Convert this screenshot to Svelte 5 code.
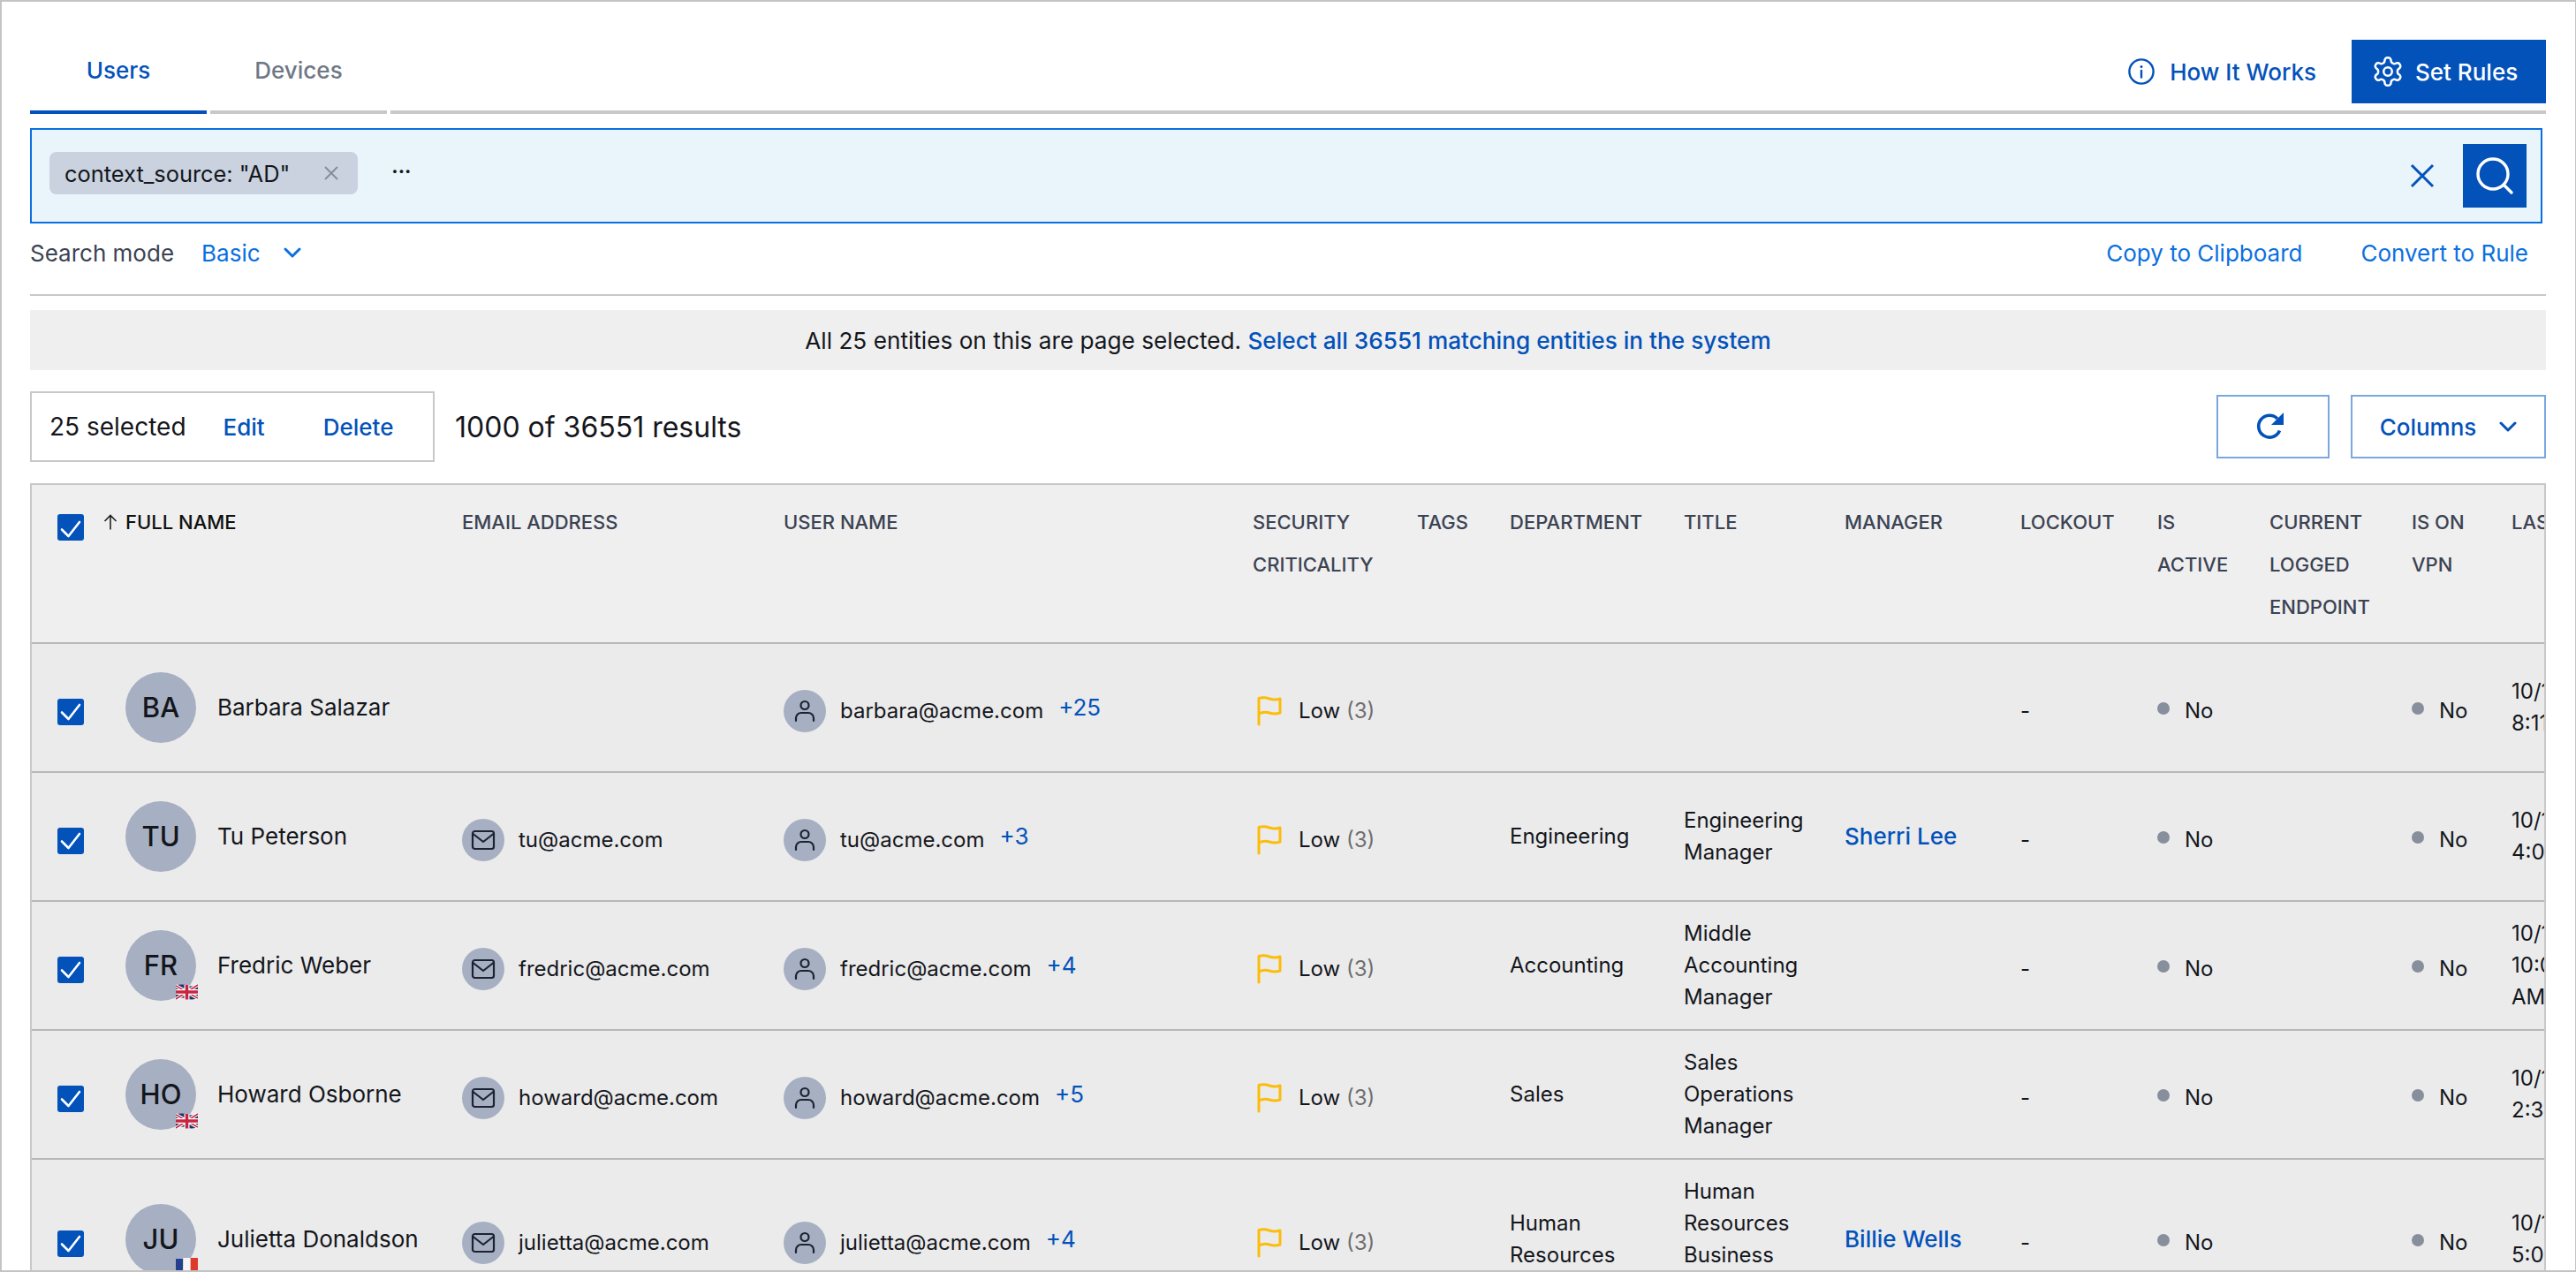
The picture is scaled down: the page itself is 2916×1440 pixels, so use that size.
<script>
  const rows = [
    { ini: 'BA', name: 'Barbara Salazar', email: '', user: 'barbara@acme.com', more: '+25', dept: '', title: '', mgr: '', last: ['10/12/2023', '8:11:20 AM'] },
    { ini: 'TU', name: 'Tu Peterson', email: 'tu@acme.com', user: 'tu@acme.com', more: '+3', dept: 'Engineering', title: 'Engineering Manager', mgr: 'Sherri Lee', last: ['10/12/2023', '4:02:11 PM'] },
    { ini: 'FR', name: 'Fredric Weber', flag: 'uk', email: 'fredric@acme.com', user: 'fredric@acme.com', more: '+4', dept: 'Accounting', title: 'Middle Accounting Manager', mgr: '', last: ['10/12/2023', '10:05:41', 'AM'] },
    { ini: 'HO', name: 'Howard Osborne', flag: 'uk', email: 'howard@acme.com', user: 'howard@acme.com', more: '+5', dept: 'Sales', title: 'Sales Operations Manager', mgr: '', last: ['10/12/2023', '2:31:09 PM'] },
    { ini: 'JU', name: 'Julietta Donaldson', flag: 'fr', email: 'julietta@acme.com', user: 'julietta@acme.com', more: '+4', dept: 'Human Resources', title: 'Human Resources Business Partner', mgr: 'Billie Wells', last: ['10/12/2023', '5:07:33 PM'] }
  ];
  const widths = [106, 381, 364, 531, 186, 105, 197, 182, 199, 155, 127, 161, 113, 37];
  const heads = ['EMAIL ADDRESS', 'USER NAME', 'SECURITY CRITICALITY', 'TAGS', 'DEPARTMENT', 'TITLE', 'MANAGER', 'LOCKOUT', 'IS ACTIVE', 'CURRENT LOGGED ENDPOINT', 'IS ON VPN'];
</script>

{#snippet check()}
  <span class="check">
    <svg viewBox="0 0 30 30" width="30" height="30"><path d="M5 15.500l7.500 7.500L25 7" fill="none" stroke="#fff" stroke-width="2.600" stroke-linecap="round" stroke-linejoin="round" /></svg>
  </span>
{/snippet}

{#snippet chevron(w, sw)}
  <svg viewBox="0 0 20 12" width={w} height={w * 0.6}><path d="M2 2l8 8 8-8" fill="none" stroke="currentColor" stroke-width={sw} stroke-linecap="round" stroke-linejoin="round" /></svg>
{/snippet}

<div class="frame">
  <header class="top">
    <div class="tab active">Users</div>
    <div class="tab">Devices</div>
    <div class="fill">
      <button class="how">
        <svg viewBox="0 0 30 30" width="30" height="30" fill="none" stroke="currentColor" stroke-width="2.400"><circle cx="15" cy="15" r="13.600" /><path d="M15 14v7.500" stroke-linecap="round" /><circle cx="15" cy="9.400" r="1.500" fill="currentColor" stroke="none" /></svg>
        How It Works
      </button>
      <button class="rules">
        <svg viewBox="0 0 24 24" width="38" height="38" fill="none" stroke="currentColor" stroke-width="1.600" stroke-linecap="round" stroke-linejoin="round"><path d="M12.220 2h-.44a2 2 0 0 0-2 2v.18a2 2 0 0 1-1 1.730l-.43.25a2 2 0 0 1-2 0l-.15-.08a2 2 0 0 0-2.730.73l-.22.38a2 2 0 0 0 .73 2.730l.15.1a2 2 0 0 1 1 1.720v.51a2 2 0 0 1-1 1.740l-.15.09a2 2 0 0 0-.73 2.730l.22.38a2 2 0 0 0 2.730.73l.15-.08a2 2 0 0 1 2 0l.43.25a2 2 0 0 1 1 1.730V20a2 2 0 0 0 2 2h.44a2 2 0 0 0 2-2v-.18a2 2 0 0 1 1-1.730l.43-.25a2 2 0 0 1 2 0l.15.08a2 2 0 0 0 2.730-.73l.22-.39a2 2 0 0 0-.73-2.730l-.15-.08a2 2 0 0 1-1-1.740v-.5a2 2 0 0 1 1-1.740l.15-.09a2 2 0 0 0 .73-2.730l-.22-.38a2 2 0 0 0-2.730-.73l-.15.08a2 2 0 0 1-2 0l-.43-.25a2 2 0 0 1-1-1.730V4a2 2 0 0 0-2-2z" /><circle cx="12" cy="12" r="3" /></svg>
        Set Rules
      </button>
    </div>
  </header>

  <div class="search">
    <span class="chip"><span class="chiptext">context_source: "AD"</span>
      <svg viewBox="0 0 18 18" width="18" height="18"><path d="M2 2l14 14M16 2L2 16" stroke="#858c99" stroke-width="1.800" fill="none" /></svg>
    </span>
    <span class="dots">···</span>
    <svg class="clear" viewBox="0 0 28 28" width="28" height="28"><path d="M2 2l24 24M26 2L2 26" stroke="#0352ba" stroke-width="3" fill="none" /></svg>
    <button class="go" aria-label="Search">
      <svg viewBox="0 0 44 44" width="44" height="44" fill="none" stroke="#fff" stroke-width="3.400" stroke-linecap="round"><circle cx="20" cy="20" r="17" /><path d="M33 33l8 8" /></svg>
    </button>
  </div>

  <div class="mode">
    <span class="ml">Search mode</span>
    <span class="basic">Basic {@render chevron(20, 3)}</span>
    <span class="spacer"></span>
    <span class="lnk">Copy to Clipboard</span>
    <span class="lnk conv">Convert to Rule</span>
  </div>
  <div class="rule"></div>

  <div class="banner">All 25 entities on this are page selected.&nbsp;<b>Select all 36551 matching entities in the system</b></div>

  <div class="tools">
    <div class="sel"><span class="seln">25 selected</span><b class="ed">Edit</b><b class="del">Delete</b></div>
    <span class="count">1000 of 36551 results</span>
    <span class="spacer"></span>
    <button class="ghost refresh" aria-label="Refresh">
      <svg viewBox="0 0 34 34" width="34" height="34"><path d="M27.500 21.500A12.400 12.400 0 1 1 25 8" fill="none" stroke="#0352ba" stroke-width="3.600" /><path d="M32 1v14H18z" fill="#0352ba" /></svg>
    </button>
    <button class="ghost cols">Columns {@render chevron(20, 3)}</button>
  </div>

  <div class="tablewrap">
    <table>
      <colgroup>
        {#each widths as w}<col style="width:{w}px" />{/each}
      </colgroup>
      <thead>
        <tr>
          <th class="cb">{@render check()}</th>
          <th class="fn">
            <svg class="arrow" viewBox="0 0 16 18" width="16" height="18"><path d="M8 17.500V1.500M1.500 8L8 1.500 14.500 8" fill="none" stroke="#222" stroke-width="1.600" /></svg>
            FULL NAME
          </th>
          {#each heads as h}<th>{h}</th>{/each}
          <th class="clip">LAST SEEN</th>
        </tr>
      </thead>
      <tbody>
        {#each rows as r}
          <tr>
            <td class="cb low">{@render check()}</td>
            <td>
              <div class="person">
                <span class="avatar">{r.ini}
                  {#if r.flag === 'uk'}
                    <svg class="flag" viewBox="0 0 25 18" width="25" height="18">
                      <path d="M0 2Q6-.5 12.500 1.500T25 1V16Q19 18.500 12.500 16.500T0 17z" fill="#26306e" />
                      <path d="M0 2L25 16M25 1L0 17" stroke="#fff" stroke-width="4" />
                      <path d="M0 2L25 16M25 1L0 17" stroke="#c8243f" stroke-width="1.500" />
                      <path d="M12.500 1V17.500M0 9H25" stroke="#fff" stroke-width="6" />
                      <path d="M12.500 1V17.500M0 9H25" stroke="#c8243f" stroke-width="3.500" />
                    </svg>
                  {:else if r.flag === 'fr'}
                    <svg class="flag" viewBox="0 0 25 18" width="25" height="18">
                      <rect width="8.300" height="18" y="1" fill="#23408f" /><rect x="8.300" width="8.400" height="18" fill="#f4f4f4" /><rect x="16.700" width="8.300" height="18" fill="#de3a2c" />
                    </svg>
                  {/if}
                </span>
                <span class="pname">{r.name}</span>
              </div>
            </td>
            <td class="low">
              {#if r.email}
                <div class="ident">
                  <span class="ic"><svg viewBox="0 0 28 24" width="28" height="24" fill="none" stroke="#1c2230" stroke-width="2.200" stroke-linejoin="round"><rect x="2" y="2" width="24" height="20" rx="2.500" /><path d="M2.500 5L14 14 25.500 5" /></svg></span>
                  {r.email}
                </div>
              {/if}
            </td>
            <td class="low">
              <div class="ident">
                <span class="ic"><svg viewBox="0 0 24 28" width="24" height="28" fill="none" stroke="#1c2230" stroke-width="2.200"><circle cx="12" cy="7.500" r="4.500" /><path d="M2 25v-3a6 6 0 0 1 6-6h8a6 6 0 0 1 6 6v3" stroke-linecap="round" /></svg></span>
                {r.user}<span class="more">{r.more}</span>
              </div>
            </td>
            <td class="low">
              <div class="sev">
                <svg viewBox="0 0 28 34" width="28" height="34" fill="none" stroke="#fcbc0a" stroke-width="3" stroke-linecap="round" stroke-linejoin="round"><path d="M2 32V2.500Q8 1 14 3t12 0V19Q20 21 14 19t-12 1" /></svg>
                <span>Low <em>(3)</em></span>
              </div>
            </td>
            <td></td>
            <td>{r.dept}</td>
            <td class="pr">{r.title}</td>
            <td class="link">{r.mgr}</td>
            <td class="low">-</td>
            <td class="low"><div class="state"><i></i>No</div></td>
            <td></td>
            <td class="low"><div class="state"><i></i>No</div></td>
            <td class="clip">{#each r.last as l}{l}<br />{/each}</td>
          </tr>
        {/each}
      </tbody>
    </table>
  </div>
</div>

<style>
  :global(body) { margin: 0; background: #fff; }
  .frame {
    box-sizing: border-box;
    width: 2916px;
    height: 1440px;
    overflow: hidden;
    border: 2px solid #c4c4c4;
    border-right-width: 1px;
    padding: 0 33px 0 32px;
    font-family: Inter, "Liberation Sans", sans-serif;
    font-size: 26px;
    color: #14161c;
  }
  button { font: inherit; background: none; border: 0; padding: 0; margin: 0; cursor: pointer; }
  b { font-weight: 500; }

  .top { display: flex; height: 127px; }
  .tab {
    box-sizing: border-box;
    width: 200px;
    margin-right: 4px;
    padding-top: 60px;
    line-height: 36px;
    text-align: center;
    font-weight: 500;
    color: #6f7785;
    border-bottom: 4px solid #c8c8c8;
  }
  .tab.active { color: #0352ba; border-bottom-color: #0352ba; }
  .fill {
    flex: 1;
    display: flex;
    justify-content: flex-end;
    align-items: flex-end;
    gap: 40px;
    padding-bottom: 8px;
    border-bottom: 4px solid #c8c8c8;
  }
  .how, .rules { display: flex; align-items: center; height: 72px; font-weight: 500; }
  .how { gap: 17px; color: #0352ba; }
  .rules { box-sizing: border-box; width: 220px; padding-left: 22px; gap: 12px; background: #0352ba; color: #fff; }

  .search {
    display: flex;
    align-items: center;
    box-sizing: border-box;
    height: 108px;
    margin: 16px 4px 0 0;
    padding: 0 16px 0 20px;
    background: #e9f4fb;
    border: 2px solid #0a6fdf;
  }
  .chip {
    display: flex;
    align-items: center;
    gap: 38px;
    box-sizing: border-box;
    height: 48px;
    padding: 0 21px 0 17px;
    background: #c9d2de;
    border-radius: 8px;
    margin-top: -6px;
  }
  .chiptext { font-size: 25.400px; }
  .dots { margin: -10px 0 0 38px; font-size: 22px; font-weight: 700; }
  .clear { margin-left: auto; margin-right: 32px; }
  .go { display: flex; align-items: center; justify-content: center; width: 72px; height: 72px; background: #0352ba; }

  .mode { display: flex; align-items: center; height: 66px; margin-bottom: 14px; }
  .ml { color: #3c4353; }
  .basic { display: flex; align-items: center; gap: 26px; margin-left: 31px; color: #0a6fdf; }
  .spacer { flex: 1; }
  .lnk { color: #0a6fdf; }
  .conv { margin: 0 20px 0 66px; }
  .rule { height: 2px; margin-bottom: 16px; background: #c8c8c8; }

  .banner {
    display: flex;
    align-items: center;
    justify-content: center;
    height: 68px;
    background: #efefef;
    font-size: 26.200px;
  }
  .banner b { color: #0352ba; }

  .tools { display: flex; align-items: center; height: 128px; }
  .sel {
    display: flex;
    align-items: center;
    box-sizing: border-box;
    width: 458px;
    height: 80px;
    padding-left: 20px;
    border: 2px solid #c8c8c8;
  }
  .seln { font-size: 28px; }
  .ed { margin-left: 42px; color: #0352ba; }
  .del { margin-left: 66px; color: #0352ba; }
  .count { margin-left: 23px; font-size: 32px; }
  .ghost {
    display: flex;
    align-items: center;
    justify-content: center;
    box-sizing: border-box;
    height: 72px;
    border: 2px solid #7ba7e0;
    color: #0352ba;
    font-weight: 500;
  }
  .refresh { width: 128px; margin-right: 24px; padding-right: 6px; }
  .cols { width: 221px; gap: 26px; }

  .tablewrap { border: 2px solid #c8c8c8; border-bottom: 0; }
  table { border-collapse: separate; border-spacing: 0; table-layout: fixed; width: 2844px; }
  thead th {
    box-sizing: border-box;
    padding: 18px 24px 16px 0;
    background: #efefef;
    border-bottom: 2px solid #b8b8b8;
    font-size: 22px;
    font-weight: 500;
    line-height: 48px;
    color: #3c4353;
    text-align: left;
    vertical-align: top;
  }
  th.fn { position: relative; color: #111; white-space: nowrap; }
  .arrow { position: absolute; left: -25px; top: 33px; }
  th.cb { padding: 33px 0 0 29px; }
  td {
    box-sizing: border-box;
    height: 146px;
    padding: 18px 0;
    background: #ebebeb;
    border-bottom: 2px solid #b8b8b8;
    font-size: 24px;
    line-height: 36px;
    vertical-align: middle;
  }
  td.low { padding-top: 26px; }
  td.cb { padding-left: 29px; padding-top: 28px; }
  td.pr { padding-right: 12px; }
  td.link { color: #0352ba; font-size: 26px; font-weight: 500; }
  .clip { overflow: hidden; white-space: nowrap; padding-right: 0; }
  .check {
    display: block;
    width: 30px;
    height: 30px;
    background: #0352ba;
    border-radius: 3px;
  }
  .person { display: flex; align-items: center; gap: 24px; white-space: nowrap; }
  .pname { font-size: 26px; }
  .avatar {
    position: relative;
    display: flex;
    align-items: center;
    justify-content: center;
    flex: none;
    width: 80px;
    height: 80px;
    border-radius: 50%;
    background: #a6b0c2;
    font-size: 31px;
    font-weight: 500;
  }
  .flag { position: absolute; left: 57px; top: 61px; }
  .ident { display: flex; align-items: center; gap: 16px; white-space: nowrap; }
  .ic {
    display: flex;
    align-items: center;
    justify-content: center;
    flex: none;
    width: 48px;
    height: 48px;
    border-radius: 50%;
    background: #a6b0c2;
  }
  .more { margin: -8px 0 0 1px; color: #0352ba; font-size: 26px; }
  .sev { display: flex; align-items: center; gap: 19px; padding-left: 5px; white-space: nowrap; }
  em { font-style: normal; color: #6f6f6f; }
  .state { display: flex; align-items: center; gap: 17px; }
  .state i { flex: none; width: 14px; height: 14px; margin-top: -6px; border-radius: 50%; background: #878e9c; }
</style>
